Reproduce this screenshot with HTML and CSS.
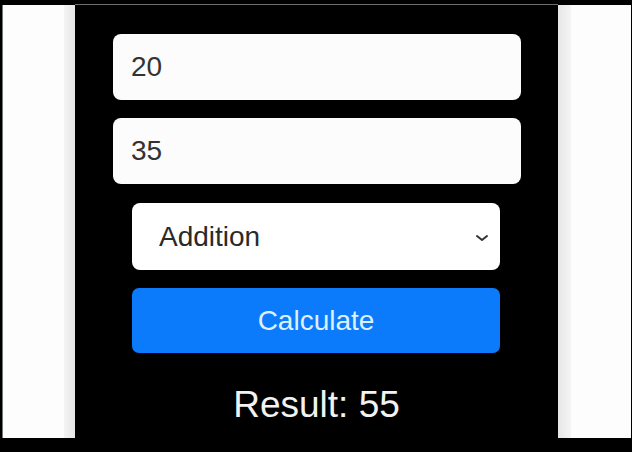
FILE: index.html
```html
<!DOCTYPE html>
<html>
<head>
<meta charset="utf-8">
<link rel="stylesheet" href="styles.css">
</head>
<body>
<div class="top"></div>
<div class="row">
  <div class="side side-left"><div class="strip"></div></div>
  <div class="center">
    <input class="field" type="text" value="20">
    <input class="field" type="text" value="35">
    <div class="select-wrap">
      <select class="op">
        <option>Addition</option>
        <option>Subtraction</option>
        <option>Multiplication</option>
        <option>Division</option>
      </select>
      <svg class="chev" width="14" height="8" viewBox="0 0 14 8"><path d="M2 2 L7 6 L12 2" fill="none" stroke="#333" stroke-width="2" stroke-linecap="round" stroke-linejoin="round"/></svg>
    </div>
    <button class="calc">Calculate</button>
    <div class="result">Result: 55</div>
  </div>
  <div class="side side-right"><div class="strip"></div></div>
</div>
</body>
</html>
```
FILE: styles.css
```css
html, body {
  margin: 0;
  padding: 0;
  background: #000;
  width: 632px;
  height: 452px;
  overflow: hidden;
  font-family: "Liberation Sans", Arial, sans-serif;
}
.top {
  height: 4px;
}
.row {
  display: flex;
  height: 434px;
  padding-left: 3px;
}
.side {
  display: flex;
  background: #fdfdfd;
  margin-top: 1px;
}
.side-left {
  width: 72px;
  justify-content: flex-end;
  box-shadow: -1px 0 0 #6f7a74;
}
.side-right {
  width: 73px;
  justify-content: flex-start;
}
.side .strip {
  width: 11px;
  background: linear-gradient(to right, #f4f4f4, #e6e6e6);
}
.side-right .strip {
  width: 13px;
  background: linear-gradient(to right, #e6e6e6, #f4f4f4);
}
.center {
  width: 483px;
  border-top: 1px solid #6b706c;
  display: flex;
  flex-direction: column;
  align-items: flex-start;
  padding-top: 29px;
  box-sizing: border-box;
}
.field {
  margin-left: 38px;
  width: 408px;
  height: 66px;
  box-sizing: border-box;
  border: none;
  border-radius: 8px;
  background: #fcfcfc;
  padding: 0 0 0 18px;
  font-family: "Liberation Sans", Arial, sans-serif;
  font-size: 28px;
  color: #333;
  outline: none;
}
.field + .field {
  margin-top: 18px;
}
.select-wrap {
  position: relative;
  margin-left: 57px;
  margin-top: 19px;
  width: 368px;
  height: 67px;
}
.op {
  appearance: none;
  -webkit-appearance: none;
  width: 100%;
  height: 100%;
  border: none;
  border-radius: 8px;
  background: #fff;
  padding: 0 0 0 27px;
  font-family: "Liberation Sans", Arial, sans-serif;
  font-size: 28px;
  color: #2a2a2a;
  outline: none;
}
.chev {
  position: absolute;
  left: 343px;
  top: 31px;
}
.calc {
  margin-left: 57px;
  margin-top: 18px;
  width: 368px;
  height: 65px;
  border: none;
  border-radius: 7px;
  background: #0b7bfb;
  color: #dcf1ff;
  font-family: "Liberation Sans", Arial, sans-serif;
  font-size: 28px;
  padding: 0;
}
.result {
  align-self: stretch;
  text-align: center;
  margin-top: 32px;
  font-size: 37px;
  line-height: 40px;
  color: #f2f2f2;
}
```
